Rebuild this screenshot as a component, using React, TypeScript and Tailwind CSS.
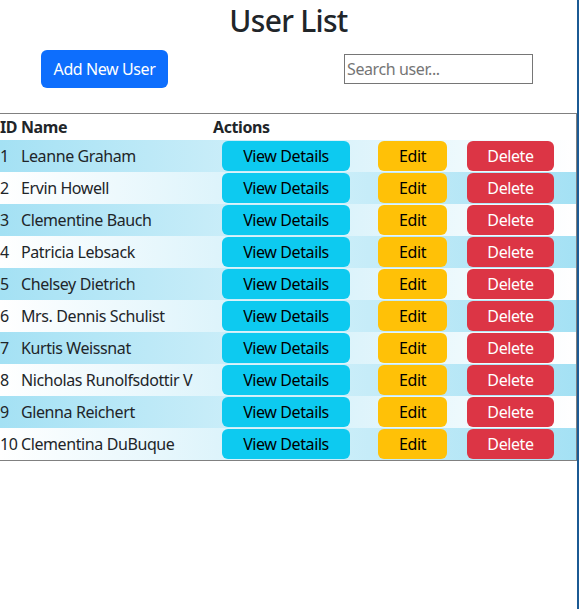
import React from "react";

const users = [
  "Leanne Graham",
  "Ervin Howell",
  "Clementine Bauch",
  "Patricia Lebsack",
  "Chelsey Dietrich",
  "Mrs. Dennis Schulist",
  "Kurtis Weissnat",
  "Nicholas Runolfsdottir V",
  "Glenna Reichert",
  "Clementina DuBuque",
];

export default function App() {
  return (
    <div className="flex h-[609px] w-[579px] bg-white text-[#212529] tracking-[-0.4px]" style={{ fontFamily: '"Noto Sans", "Open Sans", sans-serif' }}>
      <div className="w-[577px] flex flex-col">
        <h1 className="pt-[2px] text-center text-[30px] font-medium leading-[38px] tracking-[-0.7px]">User List</h1>
        <div className="flex items-center justify-between pl-[41px] pr-[44px] mt-[10px] h-[38px]">
          <button className="h-[38px] w-[127px] rounded-[6px] bg-[#0d6efd] text-white text-[16px]">Add New User</button>
          <input
            className="h-[30px] w-[189px] border border-[#767676] px-[2px] text-[16px] tracking-[-0.4px] outline-none placeholder:text-[#757575]"
            placeholder="Search user..."
          />
        </div>
        <div className="mt-[25px] border-t border-r border-b border-[#808080] w-[577px]">
          <div className="flex h-[26px] items-center font-bold text-[16px]">
            <div className="w-[21px]">ID</div>
            <div className="w-[192px]">Name</div>
            <div>Actions</div>
          </div>
          {users.map((name, i) => (
            <div
              key={name}
              className={
                "flex h-[32px] items-center text-[16px] " +
                (i % 2 === 0
                  ? "bg-gradient-to-r from-[#a4e1f4] to-white"
                  : "bg-gradient-to-r from-white to-[#a4e1f4]")
              }
            >
              <div className="w-[21px]">{i + 1}</div>
              <div className="w-[192px] whitespace-nowrap">{name}</div>
              <div className="flex items-center pl-[9px]">
                <button className="h-[30px] w-[128px] rounded-[6px] bg-[#0dcaf0] text-black">View Details</button>
                <button className="ml-[28px] h-[30px] w-[69px] rounded-[6px] bg-[#ffc107] text-black">Edit</button>
                <button className="ml-[20px] h-[30px] w-[87px] rounded-[6px] bg-[#dc3545] text-white">Delete</button>
              </div>
            </div>
          ))}
        </div>
      </div>
      <div className="w-[2px] h-[609px] bg-[#1b5a94]" />
    </div>
  );
}
